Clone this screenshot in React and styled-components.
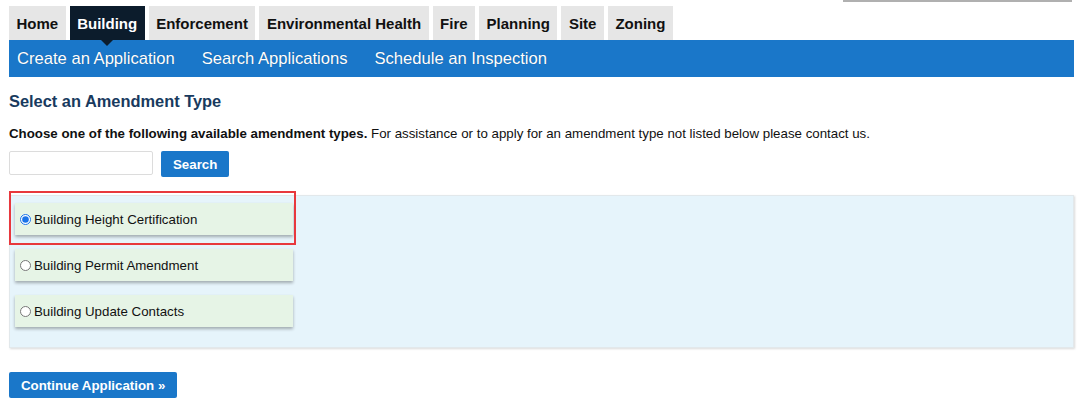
import React, { useState } from "react";
import styled, { createGlobalStyle } from "styled-components";

const GlobalStyle = createGlobalStyle`
  body {
    margin: 0;
    background: #ffffff;
    font-family: "Liberation Sans", Arial, sans-serif;
    color: #000;
  }
`;

const Page = styled.div`
  width: 1080px;
  height: 405px;
  overflow: hidden;
  position: relative;
`;

const TopLine = styled.div`
  position: absolute;
  top: 0;
  left: 843px;
  width: 229px;
  height: 2px;
  background: #b0b0b0;
`;

const Content = styled.div`
  padding: 6px 6px 0 9px;
`;

const Tabs = styled.ul`
  display: flex;
  gap: 4px;
  list-style: none;
  margin: 0;
  padding: 0;
  height: 34px;
`;

const Tab = styled.li`
  position: relative;
  display: flex;
  align-items: center;
  padding: 0 7.5px;
  font-size: 15px;
  font-weight: bold;
  background: ${(p) => (p.active ? "#0c1c2c" : "#e6e6e6")};
  color: ${(p) => (p.active ? "#ffffff" : "#111")};

  ${(p) =>
    p.active &&
    `
    &::after {
      content: "";
      position: absolute;
      left: 50%;
      bottom: -6px;
      margin-left: -6px;
      border-left: 6px solid transparent;
      border-right: 6px solid transparent;
      border-top: 6px solid #0c1c2c;
      z-index: 2;
    }
  `}
`;

const SubNav = styled.nav`
  display: flex;
  align-items: center;
  height: 37px;
  background: #1a77c9;
  padding-left: 8px;
  gap: 27px;
`;

const SubLink = styled.a`
  color: #ffffff;
  font-size: 16.6px;
  text-decoration: none;
  text-shadow: 0 0 1px rgba(0, 0, 0, 0.3);
`;

const Heading = styled.h2`
  margin: 15px 0 0;
  font-size: 16.4px;
  font-weight: bold;
  color: #183a5e;
`;

const Instructions = styled.p`
  margin: 15px 0 0;
  font-size: 13.3px;
  color: #111;
`;

const SearchRow = styled.div`
  display: flex;
  align-items: flex-start;
  gap: 8px;
  margin-top: 10px;
`;

const SearchInput = styled.input`
  box-sizing: border-box;
  width: 144px;
  height: 24px;
  border: 1px solid #dcdcdc;
  border-radius: 2px;
  margin: 0;
`;

const BlueButton = styled.button`
  height: 26px;
  padding: 0 12px;
  border: none;
  border-radius: 2px;
  background: #1a77c9;
  color: #ffffff;
  font-family: "Liberation Sans", Arial, sans-serif;
  font-size: 13.3px;
  font-weight: bold;
`;

const Panel = styled.div`
  margin-top: 18px;
  height: 153px;
  box-sizing: border-box;
  background: #e6f4fb;
  border: 1px solid #e2e8eb;
  box-shadow: 1px 1px 2px rgba(0, 0, 0, 0.15);
  padding: 7px 0 0 5px;
  display: flex;
  flex-direction: column;
  gap: 14px;
`;

const Option = styled.label`
  position: relative;
  display: flex;
  align-items: center;
  width: 278px;
  height: 32px;
  box-sizing: border-box;
  padding-left: 5px;
  background: #e6f4e6;
  box-shadow: 0 2px 3px rgba(0, 0, 0, 0.3);
  font-size: 13.3px;
  color: #111;

  ${(p) =>
    p.highlight &&
    `
    &::after {
      content: "";
      position: absolute;
      left: -6px;
      top: -12px;
      width: 283px;
      height: 50px;
      border: 2px solid #e8383d;
      pointer-events: none;
    }
  `}
`;

const Radio = styled.input`
  width: 11px;
  height: 11px;
  margin: 0 3px 0 0;
  accent-color: #1a73e8;
`;

const Footer = styled.div`
  margin-top: 24px;
`;

const tabs = [
  "Home",
  "Building",
  "Enforcement",
  "Environmental Health",
  "Fire",
  "Planning",
  "Site",
  "Zoning",
];

const options = [
  "Building Height Certification",
  "Building Permit Amendment",
  "Building Update Contacts",
];

export default function App() {
  const [selected, setSelected] = useState(0);

  return (
    <Page>
      <GlobalStyle />
      <TopLine />
      <Content>
        <Tabs>
          {tabs.map((t) => (
            <Tab key={t} active={t === "Building"}>
              {t}
            </Tab>
          ))}
        </Tabs>
        <SubNav>
          <SubLink>Create an Application</SubLink>
          <SubLink>Search Applications</SubLink>
          <SubLink>Schedule an Inspection</SubLink>
        </SubNav>

        <Heading>Select an Amendment Type</Heading>
        <Instructions>
          <b>Choose one of the following available amendment types.</b> For
          assistance or to apply for an amendment type not listed below please
          contact us.
        </Instructions>

        <SearchRow>
          <SearchInput type="text" />
          <BlueButton>Search</BlueButton>
        </SearchRow>

        <Panel>
          {options.map((o, i) => (
            <Option key={o} highlight={i === 0}>
              <Radio
                type="radio"
                name="amendment"
                checked={selected === i}
                onChange={() => setSelected(i)}
              />
              {o}
            </Option>
          ))}
        </Panel>

        <Footer>
          <BlueButton>Continue Application »</BlueButton>
        </Footer>
      </Content>
    </Page>
  );
}
